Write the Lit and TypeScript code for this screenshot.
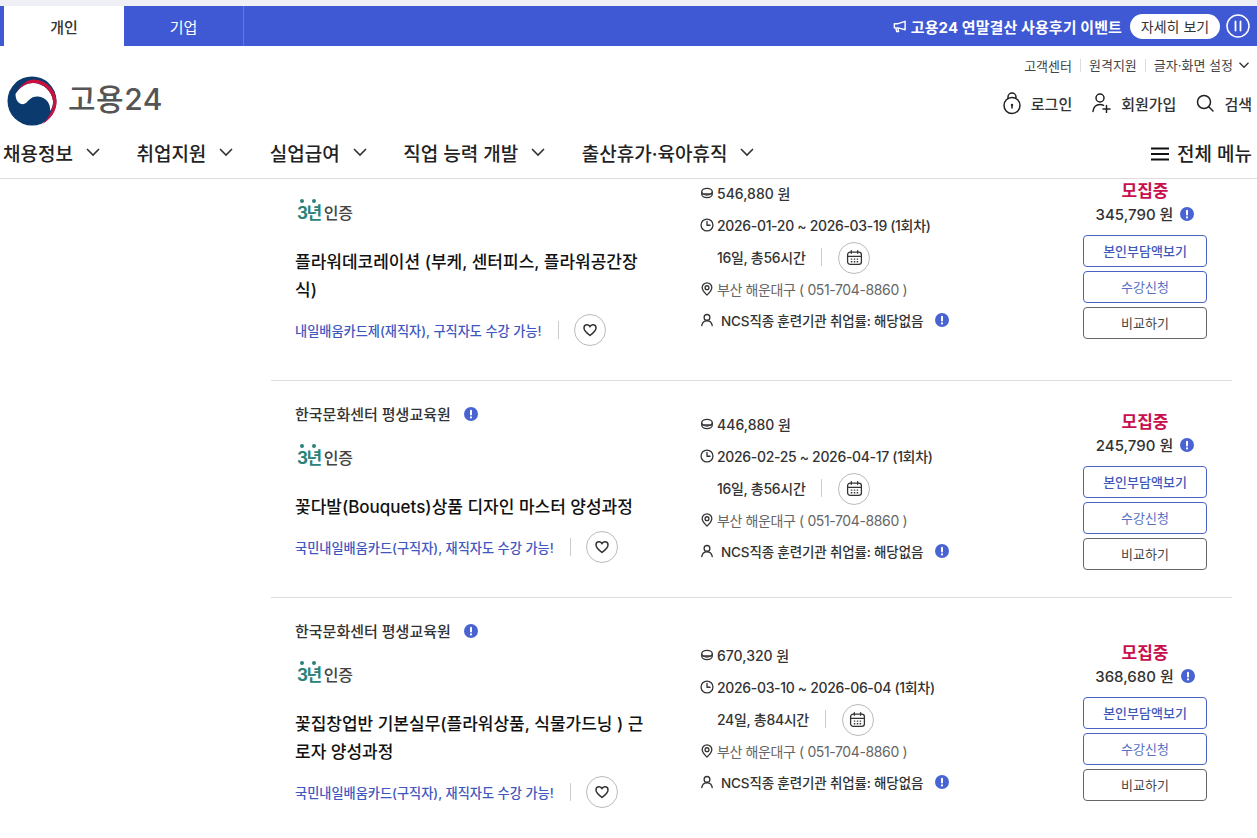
import { LitElement, html, css, svg, nothing } from "lit";
import { customElement } from "lit/decorators.js";

const info = (cls = "info") => html`<svg class=${cls} viewBox="0 0 14 14" width="14" height="14"><circle cx="7" cy="7" r="7" fill="#4a63d3"/><rect x="6" y="2.8" width="2" height="5.6" rx="1" fill="#fff"/><circle cx="7" cy="10.4" r="1.1" fill="#fff"/></svg>`;
const chevron = (s = 16, w = 1.6) => html`<svg width=${s} height=${s} viewBox="0 0 16 16" fill="none" stroke="#333" stroke-width=${w}><path d="M2 5l6 6 6-6"/></svg>`;
const stroke = (body: unknown, size = 15, vb = 16, w = 1.5) => html`<svg width=${size} height=${size} viewBox="0 0 ${vb} ${vb}" fill="none" stroke="#333" stroke-width=${w} stroke-linecap="round" stroke-linejoin="round">${body}</svg>`;

const courses = [
  { org: "", title: "플라워데코레이션 (부케, 센터피스, 플라워공간장식)", sub: "내일배움카드제(재직자), 구직자도 수강 가능!", price: "546,880 원", date: "2026-01-20 ~ 2026-03-19 (1회차)", days: "16일, 총56시간", self: "345,790 원" },
  { org: "한국문화센터 평생교육원", title: "꽃다발(Bouquets)상품 디자인 마스터 양성과정", sub: "국민내일배움카드(구직자), 재직자도 수강 가능!", price: "446,880 원", date: "2026-02-25 ~ 2026-04-17 (1회차)", days: "16일, 총56시간", self: "245,790 원" },
  { org: "한국문화센터 평생교육원", title: "꽃집창업반 기본실무(플라워상품, 식물가드닝 ) 근로자 양성과정", sub: "국민내일배움카드(구직자), 재직자도 수강 가능!", price: "670,320 원", date: "2026-03-10 ~ 2026-06-04 (1회차)", days: "24일, 총84시간", self: "368,680 원" },
];
const navItems = ["채용정보", "취업지원", "실업급여", "직업 능력 개발", "출산휴가·육아휴직"];

@customElement("app-root")
export class AppRoot extends LitElement {
  static styles = css`
    :host { display: block; height: 838px; overflow: hidden; background: #fff; color: #222;
      font-family: Inter, "Noto Sans CJK KR", "Noto Sans", sans-serif; }
    * { box-sizing: border-box; }
    svg { display: block; flex: none; }
    .strip { height: 6px; background: #eef0f5; }
    .topbar { height: 40px; background: #3f58d3; display: flex; padding-left: 4px; color: #fff; align-items: stretch; }
    .tab { width: 120px; display: flex; align-items: center; justify-content: center; font-size: 15px; }
    .tab.on { background: #fff; color: #333; font-weight: 500; }
    .tab.off { width: 120px; border-right: 1px solid #6478dc; }
    .banner { margin-left: auto; display: flex; align-items: center; padding-right: 7px; font-size: 15px; font-weight: 700; letter-spacing: 0.1px; }
    .banner .mega { margin-right: 4px; }
    .more { background: #fff; color: #333; border-radius: 13px; height: 25px; width: 90px; display: flex; align-items: center; justify-content: center; font-size: 14px; font-weight: 400; margin-left: 8px; letter-spacing: 0; }
    .pause { margin-left: 6px; }
    .util { height: 30px; display: flex; justify-content: flex-end; align-items: center; padding: 8px 7px 0 0; font-size: 13px; color: #444; }
    .util span + span { margin-left: 8px; padding-left: 8px; border-left: 1px solid #ddd; line-height: 13px; }
    .util svg { margin-left: 5px; }
    .brand { height: 52px; display: flex; align-items: flex-start; padding-left: 6.5px; }
    .logo-text { font-size: 30px; font-weight: 500; color: #555; margin-left: 11.5px; line-height: 46px; letter-spacing: 0.5px; }
    .actions { margin-left: auto; padding: 15px 5px 0 0; display: flex; align-items: center; gap: 20px; font-size: 15px; font-weight: 500; color: #333; }
    .act { display: flex; align-items: center; gap: 10px; }
    .nav { height: 51px; display: flex; align-items: center; padding: 0 5px 2px 3px; border-bottom: 1px solid #ddd; font-size: 19px; font-weight: 500; color: #222; }
    .nav-item { display: flex; align-items: center; gap: 12px; margin-right: 35.5px; }
    .all { margin-left: auto; display: flex; align-items: center; gap: 8px; }
    .all svg { margin-top: 3px; }
    .main { height: 659px; overflow: hidden; padding-left: 271px; padding-right: 25px; }
    .list { margin-top: -43px; }
    .card { display: grid; grid-template-columns: 429px 1fr 124px; align-items: center; padding-right: 25px; border-bottom: 1px solid #ddd; }
    .card:last-child { border-bottom: 0; }
    .left { display: flex; flex-direction: column; padding: 23px 0 34px 24px; }
    .org { display: flex; align-items: center; gap: 13px; height: 20px; padding-bottom: 2px; font-size: 15px; font-weight: 500; color: #333; }
    .org svg { margin-top: 2px; }
    .cert { display: flex; align-items: flex-end; height: 24px; margin-top: 21px; padding-left: 2px; font-size: 16px; font-weight: 500; color: #444; }
    .years { position: relative; color: #2b8279; font-weight: 700; font-size: 17px; line-height: 22px; margin-right: 3px; letter-spacing: -1.5px; }
    .years i { position: absolute; top: -3px; width: 4px; height: 4px; border-radius: 50%; background: #2b8279; }
    .years i:nth-child(1) { left: 3px; }
    .years i:nth-child(2) { left: 15px; }
    .title { margin: 24px 0 0; font-size: 17px; font-weight: 500; line-height: 28px; color: #111; width: 352px; word-break: break-all; }
    .sub { margin-top: 10px; height: 32px; display: flex; align-items: center; font-size: 13.2px; font-weight: 500; color: #3f58c0; }
    .vr { width: 1px; height: 18px; background: #ccc; margin: 0 15px 0 16px; }
    .round { width: 32px; height: 32px; border: 1px solid #bbb; border-radius: 50%; display: flex; align-items: center; justify-content: center; }
    .mid { display: flex; flex-direction: column; padding-bottom: 3px; font-size: 14px; font-weight: 500; color: #333; }
    .row { height: 32px; display: flex; align-items: center; gap: 3px; }
    .row.date { letter-spacing: -0.33px; }
    .row.indent { padding-left: 17px; letter-spacing: -0.3px; }
    .row.indent .round { margin-top: 2px; }
    .row.loc { font-weight: 400; color: #666; letter-spacing: -0.38px; }
    .row .vr { margin: 0 13px 0 13px; }
    .row.ncs { gap: 7px; padding-bottom: 2px; font-size: 13.5px; letter-spacing: -0.15px; }
    .row.ncs .info { margin: 0 0 0 5px; }
    .right { display: flex; flex-direction: column; align-items: center; }
    .state { height: 24px; line-height: 26px; font-size: 17px; font-weight: 700; color: #c8104f; }
    .self { height: 25px; display: flex; align-items: center; gap: 7px; padding-bottom: 2px; font-size: 15px; font-weight: 500; color: #333; margin: 0 0 8px; }
    .self svg { margin-top: 2px; }
    .btn { width: 124px; height: 32px; border: 1px solid #4a63c0; border-radius: 4px; display: flex; align-items: center; justify-content: center; font-size: 13px; color: #5a6fc4; background: #fff; padding: 0; font-family: inherit; }
    .btn + .btn { margin-top: 4px; }
    .btn.primary { color: #3f58b8; font-weight: 500; }
    .btn.plain { border-color: #666; color: #444; }
  `;

  private logo() {
    return html`<svg width="50" height="50" viewBox="0 0 50 50">
      <circle cx="25" cy="25" r="24.5" fill="#0b3a6f"/>
      <path d="M8.500 18C13 11 19 7 26 7c10 0 19 8 20 18 .3 4-1 7-3 10 1-7-4-14-12-14.500-6-.5-9 3.500-12 6.500-4 3-10.500 0-10.500-9z" fill="#fff"/>
      <path d="M9 17C14 8 20 3.500 27 3.500 39 4 49 14 49.500 25c.5 9-5.500 18-14.500 23.500C42 42 46.500 33 46 25 45 15 36 7 26 7 19 7 13 11 9 17z" fill="#c9103f"/>
    </svg>`;
  }

  private card(c: (typeof courses)[number]) {
    return html`<article class="card">
      <div class="left">
        <div class="org">${c.org ? html`${c.org} ${info()}` : nothing}</div>
        <div class="cert"><span class="years"><i></i><i></i>3년</span>인증</div>
        <h3 class="title">${c.title}</h3>
        <div class="sub">${c.sub}<span class="vr"></span>
          <span class="round">${stroke(svg`<path d="M8 13.500C4 10.500 2 8.500 2 6a3.100 3.100 0 0 1 6-1.200A3.100 3.100 0 0 1 14 6c0 2.500-2 4.500-6 7.500z"/>`, 16)}</span></div>
      </div>
      <div class="mid">
        <div class="row">${stroke(svg`<ellipse cx="8" cy="6.500" rx="6" ry="3.800"/><path d="M2 7v2.500c0 2.100 2.700 3.800 6 3.800s6-1.700 6-3.800V7M2.500 9h11"/>`, 14)}${c.price}</div>
        <div class="row date">${stroke(svg`<circle cx="8" cy="8" r="6.800"/><path d="M8 4v4.300h3.500"/>`, 14)}${c.date}</div>
        <div class="row indent">${c.days}<span class="vr"></span>
          <span class="round">${stroke(svg`<rect x="1.500" y="3" width="13" height="11.500" rx="2.500"/><path d="M1.500 7h13M5 1.500v2.500M11 1.500v2.500M5 9.500h.5M7.800 9.500h.5M10.500 9.500h.5M5 12h.5M7.800 12h.5M10.500 12h.5"/>`, 17, 16, 1.2)}</span></div>
        <div class="row loc">${stroke(svg`<path d="M8 15C5 12 2.500 9.500 2.500 6.500a5.500 5.500 0 0 1 11 0C13.500 9.500 11 12 8 15z"/><circle cx="8" cy="6.500" r="2.200"/>`, 14)}부산 해운대구 ( 051-704-8860 )</div>
        <div class="row ncs">${stroke(svg`<circle cx="8" cy="5" r="3.300"/><path d="M2 14.500c.5-3.500 3-5.500 6-5.500s5.500 2 6 5.500"/>`, 14)}NCS직종 훈련기관 취업률: 해당없음 ${info()}</div>
      </div>
      <div class="right">
        <div class="state">모집중</div>
        <div class="self">${c.self} ${info()}</div>
        <button class="btn primary">본인부담액보기</button>
        <button class="btn">수강신청</button>
        <button class="btn plain">비교하기</button>
      </div>
    </article>`;
  }

  render() {
    return html`
      <div class="strip"></div>
      <div class="topbar">
        <div class="tab on">개인</div>
        <div class="tab off">기업</div>
        <div class="banner">
          <svg class="mega" width="15" height="15" viewBox="0 0 16 16" fill="none" stroke="#fff" stroke-width="1.500" stroke-linejoin="round"><path d="M14 2.500v9L6.500 9.500H2.500V5h4zM4 9.500l1 4h2l-.8-4"/></svg>
          고용24 연말결산 사용후기 이벤트
          <span class="more">자세히 보기</span>
          <svg class="pause" width="24" height="24" viewBox="0 0 24 24" fill="none" stroke="#fff" stroke-width="1.500"><circle cx="12" cy="12" r="11"/><path d="M9.500 7.500v9M14.500 7.500v9" stroke-linecap="round" stroke-width="1.800"/></svg>
        </div>
      </div>
      <header>
        <div class="util"><span>고객센터</span><span>원격지원</span><span>글자·화면 설정</span>${chevron(12, 1.8)}</div>
        <div class="brand">
          ${this.logo()}
          <div class="logo-text">고용24</div>
          <div class="actions">
            <div class="act"><svg width="18" height="24" viewBox="0 0 18 24" fill="none" stroke="#222" stroke-width="1.500"><circle cx="9" cy="14.500" r="8"/><path d="M5 8V6a4 4 0 0 1 8 0v1"/><circle cx="9" cy="14" r="1.200" fill="#222" stroke="none"/><path d="M9 14.500v3"/></svg>로그인</div>
            <div class="act"><svg width="19" height="20" viewBox="0 0 19 20" fill="none" stroke="#222" stroke-width="1.500" stroke-linecap="round"><circle cx="8" cy="5" r="4"/><path d="M1 18.500c.5-4 3-7 7-7 1.500 0 2.500.3 3.500.8M14.500 12.500v7M11 16h7"/></svg>회원가입</div>
            <div class="act"><svg width="18" height="18" viewBox="0 0 18 18" fill="none" stroke="#222" stroke-width="1.500" stroke-linecap="round"><circle cx="8" cy="8" r="6.500"/><path d="M13 13l4 4"/></svg>검색</div>
          </div>
        </div>
        <nav class="nav">
          ${navItems.map((n) => html`<div class="nav-item">${n}${chevron()}</div>`)}
          <div class="all"><svg width="18" height="14" viewBox="0 0 18 14" stroke="#111" stroke-width="1.800"><path d="M0 1.500h18M0 7h18M0 12.500h18"/></svg>전체 메뉴</div>
        </nav>
      </header>
      <main class="main"><div class="list">${courses.map((c) => this.card(c))}</div></main>
    `;
  }
}
